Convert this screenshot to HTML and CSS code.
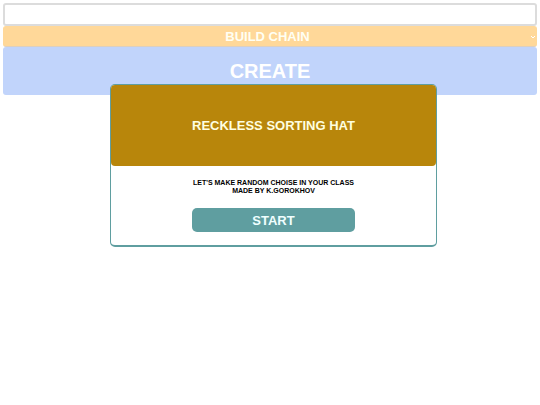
FILE: index.html
```
<!DOCTYPE html>
<html lang="en">
  <head>
    <meta charset="UTF-8" />
    <meta name="viewport" content="width=device-width, initial-scale=1.0" />
    <title>Reckless sorting hat</title>
    <link rel="stylesheet" href="styles.css">
  </head>
  <body>
    <form class="controls">
      <input class="names" type="text" aria-label="Names" />
      <div class="select-wrap">
        <select class="mode" aria-label="Mode">
          <option>BUILD CHAIN</option>
        </select>
        <svg class="arrow" viewBox="0 0 6 4" aria-hidden="true">
          <path d="M1 1 L3 3 L5 1" />
        </svg>
      </div>
      <button class="create" type="button">CREATE</button>
    </form>

    <div class="modal" role="dialog" aria-labelledby="title">
      <h1 class="modal-header" id="title">RECKLESS SORTING HAT</h1>
      <p class="modal-text">
        LET'S MAKE RANDOM CHOISE IN YOUR CLASS<br />
        MADE BY K.GOROKHOV
      </p>
      <button class="start" type="button">START</button>
    </div>
  </body>
</html>
```

FILE: styles.css
```
* {
  box-sizing: border-box;
}
body {
  margin: 3px;
  font-family: "Liberation Sans", Arial, sans-serif;
  font-weight: bold;
  background-color: #fff;
}
.controls {
  display: flex;
  flex-direction: column;
}
.names,
.mode,
.create {
  width: 100%;
  font-family: inherit;
  font-weight: bold;
  border-radius: 3px;
}
.names {
  height: 23px;
  padding: 0 3px;
  border: 2px solid #dcdcdc;
  font-size: 13px;
}
.select-wrap {
  position: relative;
  display: flex;
}
.mode {
  appearance: none;
  height: 21px;
  padding: 0 5px 0 0;
  border: 1px solid #ffd899;
  border-bottom-color: #dccfc0;
  background-color: #ffd899;
  color: #fffff3;
  font-size: 13px;
  text-align: center;
  text-align-last: center;
}
/* Small arrow over the right end of the select */
.arrow {
  position: absolute;
  top: 9px;
  right: 1px;
  width: 6px;
  height: 4px;
  fill: none;
  stroke: #fff;
  pointer-events: none;
}
.create {
  height: 48px;
  padding: 0;
  border: none;
  background-color: #c1d4fb;
  color: #fff;
  font-size: 20px;
}
/* Start window */
.modal {
  position: absolute;
  top: 84px;
  left: 0;
  right: 0;
  display: flex;
  flex-direction: column;
  align-items: center;
  width: calc(60vw + 3px);
  margin-left: calc(20vw + 2px);
  padding-bottom: 13px;
  border: 1px solid #5f9ea0;
  border-bottom-width: 2px;
  border-radius: 5px;
  background-color: #fff;
  text-align: center;
}
.modal-header {
  display: flex;
  align-items: center;
  justify-content: center;
  width: 100%;
  height: 81px;
  margin: 0;
  border-radius: 4px;
  background-color: #b8860b;
  color: #ffffe0;
  font-size: 13px;
}
.modal-text {
  margin: 13px 0;
  color: #000;
  font-size: 7px;
  line-height: 8px;
}
.start {
  width: 50%;
  height: 24px;
  padding: 0;
  border: none;
  border-radius: 5px;
  background-color: #5f9ea0;
  color: #f0ffff;
  font-family: inherit;
  font-size: 13px;
  font-weight: bold;
}
```
